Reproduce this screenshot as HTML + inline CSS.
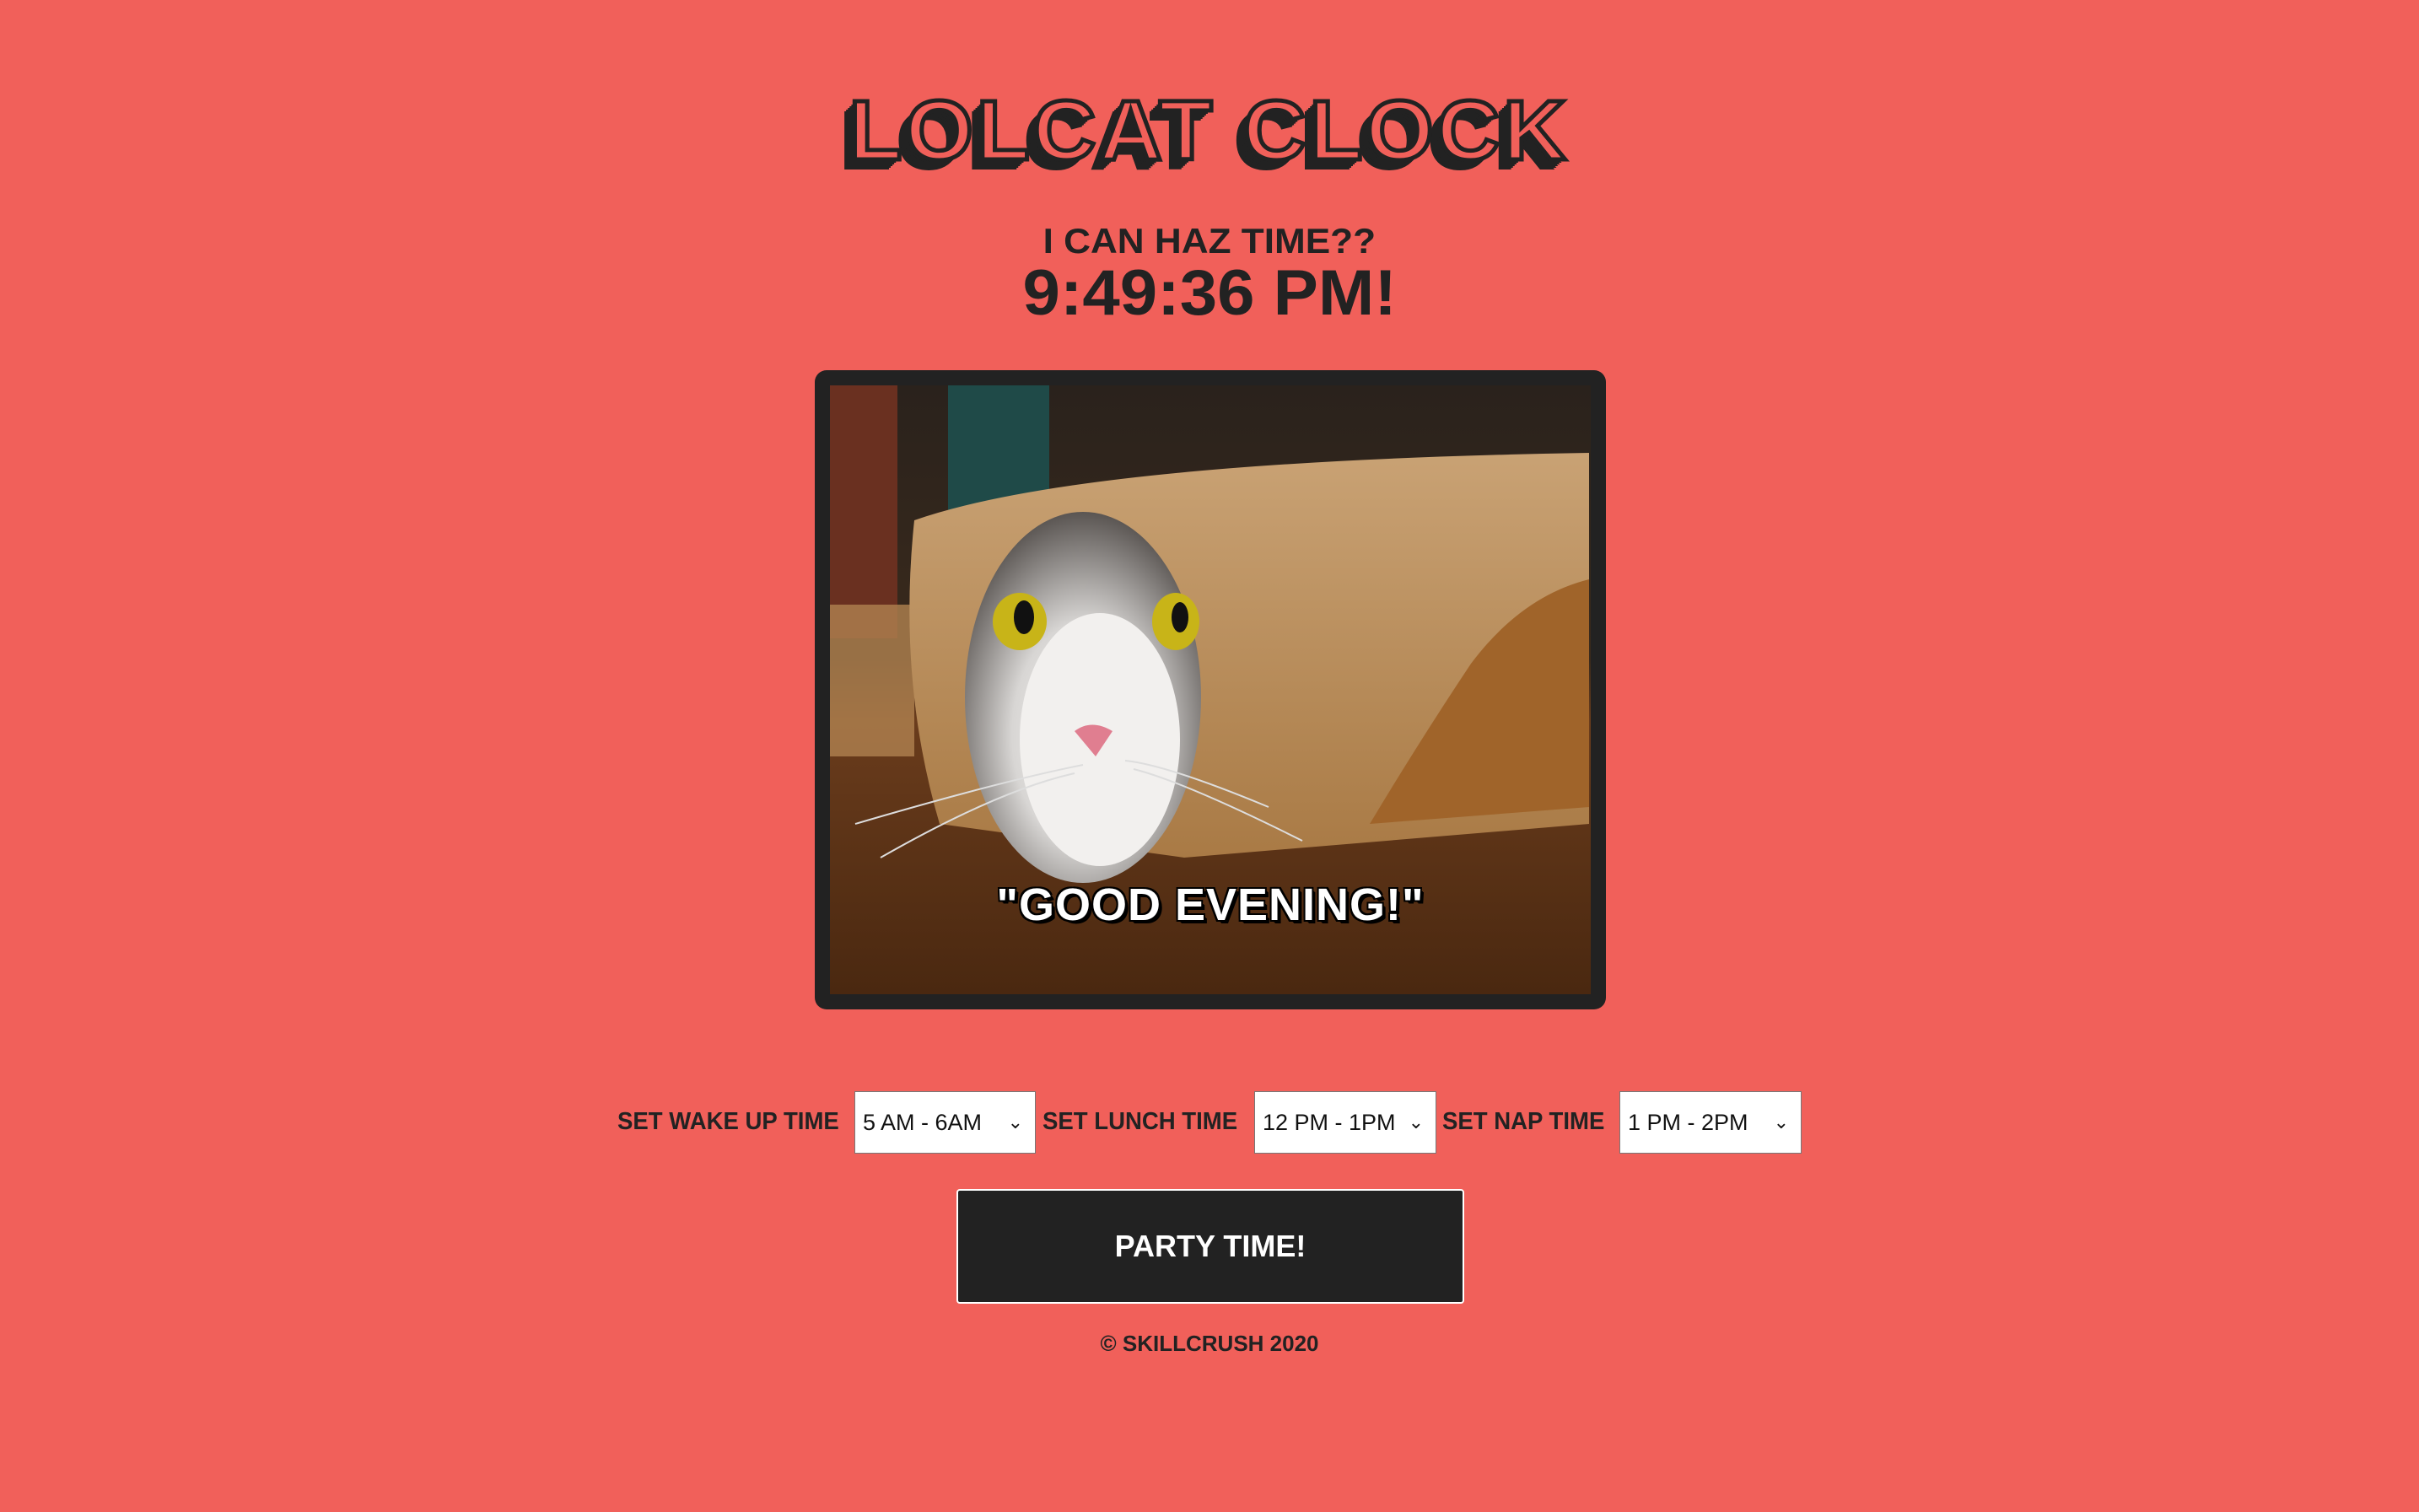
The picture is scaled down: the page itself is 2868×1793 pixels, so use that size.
<!DOCTYPE html>
<html><head><meta charset="utf-8"><style>
html,body{margin:0;padding:0}
body{width:2868px;height:1793px;background:#f1605a;position:relative;overflow:hidden;font-family:"Liberation Sans",sans-serif;color:#222}
.c{position:absolute;left:0;width:2868px;text-align:center;white-space:nowrap}
.title{top:98px;font-size:100px;font-weight:bold;letter-spacing:4px;color:#f1605a;-webkit-text-stroke:5px #222;
text-shadow:-2px 2px 0 #222,-4px 4px 0 #222,-6px 6px 0 #222,-8px 8px 0 #222,-10px 10px 0 #222,-12px 12px 0 #222}
.title span{display:inline-block;transform:scaleX(1.03)}
.sub{top:262px;font-size:42px;font-weight:900;}
.sub span{display:inline-block;transform:scaleX(1.05)}
.time{top:304px;font-size:76px;font-weight:bold}
.time span{display:inline-block;transform:scaleX(1.05)}
.frame{position:absolute;left:966px;top:439px;width:902px;height:722px;border:18px solid #222;border-radius:14px;overflow:hidden}
.cap{position:absolute;left:0;width:902px;top:585px;text-align:center;font-size:54px;font-weight:bold;color:#fff;letter-spacing:1px;
text-shadow:3px 3px 0 #000,-2px -2px 0 #000,2px -2px 0 #000,-2px 2px 0 #000,4px 4px 0 #000}
.lab{position:absolute;top:1314px;font-size:29px;font-weight:900;transform-origin:0 0;transform:scaleX(0.95)}
.sel{position:absolute;top:1294px;height:74px;background:#fff;border:1px solid #777;box-sizing:border-box;font-size:27px;color:#111;line-height:72px;padding-left:9px}
.sel i{position:absolute;right:14px;top:0;font-style:normal;font-size:22px}
.btn{position:absolute;left:1134px;top:1410px;width:602px;height:136px;background:#222;border:2px solid #fff;box-sizing:border-box;border-radius:4px;color:#fff;font-size:36px;font-weight:900;text-align:center;line-height:132px}
.foot{top:1578px;font-size:26px;font-weight:900}
</style></head><body>
<div class="c title"><span>LOLCAT CLOCK</span></div>
<div class="c sub"><span>I CAN HAZ TIME??</span></div>
<div class="c time"><span>9:49:36 PM!</span></div>
<div class="frame">
<svg width="902" height="722" viewBox="0 0 902 722">
<defs>
<linearGradient id="bg" x1="0" y1="0" x2="0" y2="1"><stop offset="0" stop-color="#2a221c"/><stop offset=".45" stop-color="#3a2a1c"/><stop offset=".55" stop-color="#6a3c1c"/><stop offset="1" stop-color="#4a2810"/></linearGradient>
<linearGradient id="pap" x1="0" y1="0" x2="0" y2="1"><stop offset="0" stop-color="#c9a274"/><stop offset="1" stop-color="#a97a45"/></linearGradient>
<radialGradient id="face" cx=".5" cy=".6" r=".6"><stop offset="0" stop-color="#f4f2f0"/><stop offset=".5" stop-color="#d8d6d4"/><stop offset="1" stop-color="#5a5552"/></radialGradient>
</defs>
<rect width="902" height="722" fill="url(#bg)"/>
<rect x="0" y="0" width="80" height="300" fill="#6a3020"/>
<rect x="140" y="0" width="120" height="150" fill="#1f4a48"/>
<rect x="0" y="260" width="100" height="180" fill="#b08250" opacity=".8"/>
<path d="M100 160 Q300 90 900 80 L900 520 L420 560 L130 520 Q80 350 100 160Z" fill="url(#pap)"/>
<path d="M900 230 Q820 250 760 330 Q700 420 640 520 L900 500Z" fill="#a0642a"/>
<ellipse cx="300" cy="370" rx="140" ry="220" fill="url(#face)"/>
<ellipse cx="320" cy="420" rx="95" ry="150" fill="#f2f0ee"/>
<ellipse cx="225" cy="280" rx="32" ry="34" fill="#c8b418"/><ellipse cx="230" cy="275" rx="12" ry="20" fill="#111"/>
<ellipse cx="410" cy="280" rx="28" ry="34" fill="#c8b418"/><ellipse cx="415" cy="275" rx="10" ry="18" fill="#111"/>
<path d="M290 410 Q310 395 335 410 L315 440Z" fill="#e07e90"/>
<path d="M30 520 Q200 470 300 450 M60 560 Q200 480 290 460 M520 500 Q400 450 350 445 M560 540 Q420 470 360 455" stroke="#ddd" stroke-width="2" fill="none"/>
</svg>
<div class="cap">"GOOD EVENING!"</div>
</div>
<div class="lab" style="left:732px">SET WAKE UP TIME</div>
<div class="sel" style="left:1013px;width:215px">5 AM - 6AM<i>⌄</i></div>
<div class="lab" style="left:1236px">SET LUNCH TIME</div>
<div class="sel" style="left:1487px;width:216px">12 PM - 1PM<i>⌄</i></div>
<div class="lab" style="left:1710px">SET NAP TIME</div>
<div class="sel" style="left:1920px;width:216px">1 PM - 2PM<i>⌄</i></div>
<div class="btn">PARTY TIME!</div>
<div class="c foot">© SKILLCRUSH 2020</div>
</body></html>
